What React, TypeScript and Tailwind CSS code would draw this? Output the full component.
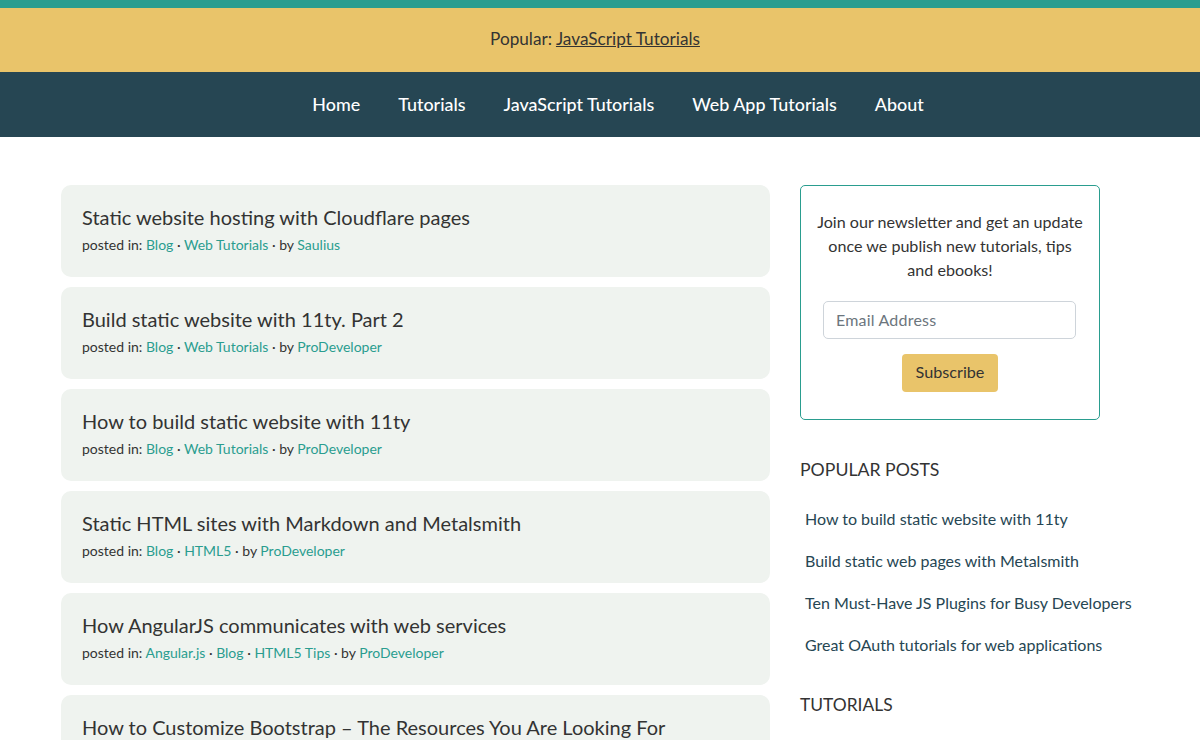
const font = "font-['Lato','Noto_Sans',sans-serif]";

const navLinks = ["Home", "Tutorials", "JavaScript Tutorials", "Web App Tutorials", "About"];

const posts = [
  { title: "Static website hosting with Cloudflare pages", cats: ["Blog", "Web Tutorials"], author: "Saulius" },
  { title: "Build static website with 11ty. Part 2", cats: ["Blog", "Web Tutorials"], author: "ProDeveloper" },
  { title: "How to build static website with 11ty", cats: ["Blog", "Web Tutorials"], author: "ProDeveloper" },
  { title: "Static HTML sites with Markdown and Metalsmith", cats: ["Blog", "HTML5"], author: "ProDeveloper" },
  { title: "How AngularJS communicates with web services", cats: ["Angular.js", "Blog", "HTML5 Tips"], author: "ProDeveloper" },
  { title: "How to Customize Bootstrap – The Resources You Are Looking For", cats: ["Blog", "Web Tutorials"], author: "ProDeveloper" },
];

const popular = [
  "How to build static website with 11ty",
  "Build static web pages with Metalsmith",
  "Ten Must-Have JS Plugins for Busy Developers",
  "Great OAuth tutorials for web applications",
];

export default function App() {
  return (
    <div className={`${font} h-[740px] overflow-hidden bg-white text-[#333333]`}>
      <div className="h-2 bg-[#2a9d8f]" />
      <div className="flex h-16 items-center justify-center bg-[#e9c46a] pr-[10px] pb-[2px] text-[17.2px]">
        <p>
          Popular: <a className="underline">JavaScript Tutorials</a>
        </p>
      </div>
      <nav className="flex h-[65px] items-center justify-center gap-[38px] bg-[#264653] pl-[36px] text-[17.9px] font-medium text-white">
        {navLinks.map((link) => (
          <a key={link}>{link}</a>
        ))}
      </nav>

      <div className="flex gap-[30px] pt-12 pl-[61px]">
        <main className="flex w-[709px] shrink-0 flex-col gap-[10px]">
          {posts.map((post) => (
            <article key={post.title} className="h-[92px] rounded-[10px] bg-[#eff3ef] px-[21px] pt-[18px]">
              <h2 className="text-[20px] leading-7">{post.title}</h2>
              <p className="mt-[4px] text-[14px] leading-5">
                posted in:{" "}
                {post.cats.map((cat, i) => (
                  <span key={cat}>
                    {i > 0 && " · "}
                    <a className="text-[#2a9d8f]">{cat}</a>
                  </span>
                ))}{" "}
                · by <a className="text-[#2a9d8f]">{post.author}</a>
              </p>
            </article>
          ))}
        </main>

        <aside className="w-[340px] shrink-0">
          <div className="flex h-[235px] w-[300px] flex-col items-center rounded-[5px] border border-[#2a9d8f] px-[15px] pt-[24px]">
            <p className="text-center text-[16.1px] leading-6">
              Join our newsletter and get an update once we publish new tutorials, tips and ebooks!
            </p>
            <input
              placeholder="Email Address"
              className="mt-[19px] mr-[1px] h-[38px] w-[253px] rounded-[5px] border border-[#ced4da] px-3 pb-[1px] text-[16px] tracking-[0.2px] placeholder:text-[#6c757d]"
            />
            <button className="mt-[15px] h-[38px] w-[96px] rounded-[4px] bg-[#e9c46a] pb-[2px] text-[16.2px]">
              Subscribe
            </button>
          </div>

          <h3 className="mt-[39px] text-[17.7px] leading-[22px]">POPULAR POSTS</h3>
          <ul className="mt-[17px] flex flex-col pl-[5px] text-[16px] text-[#264653]">
            {popular.map((item) => (
              <li key={item} className="flex h-[42px] items-center whitespace-nowrap">
                {item}
              </li>
            ))}
          </ul>
          <h3 className="mt-[28px] text-[17.4px] leading-[22px]">TUTORIALS</h3>
        </aside>
      </div>
    </div>
  );
}
